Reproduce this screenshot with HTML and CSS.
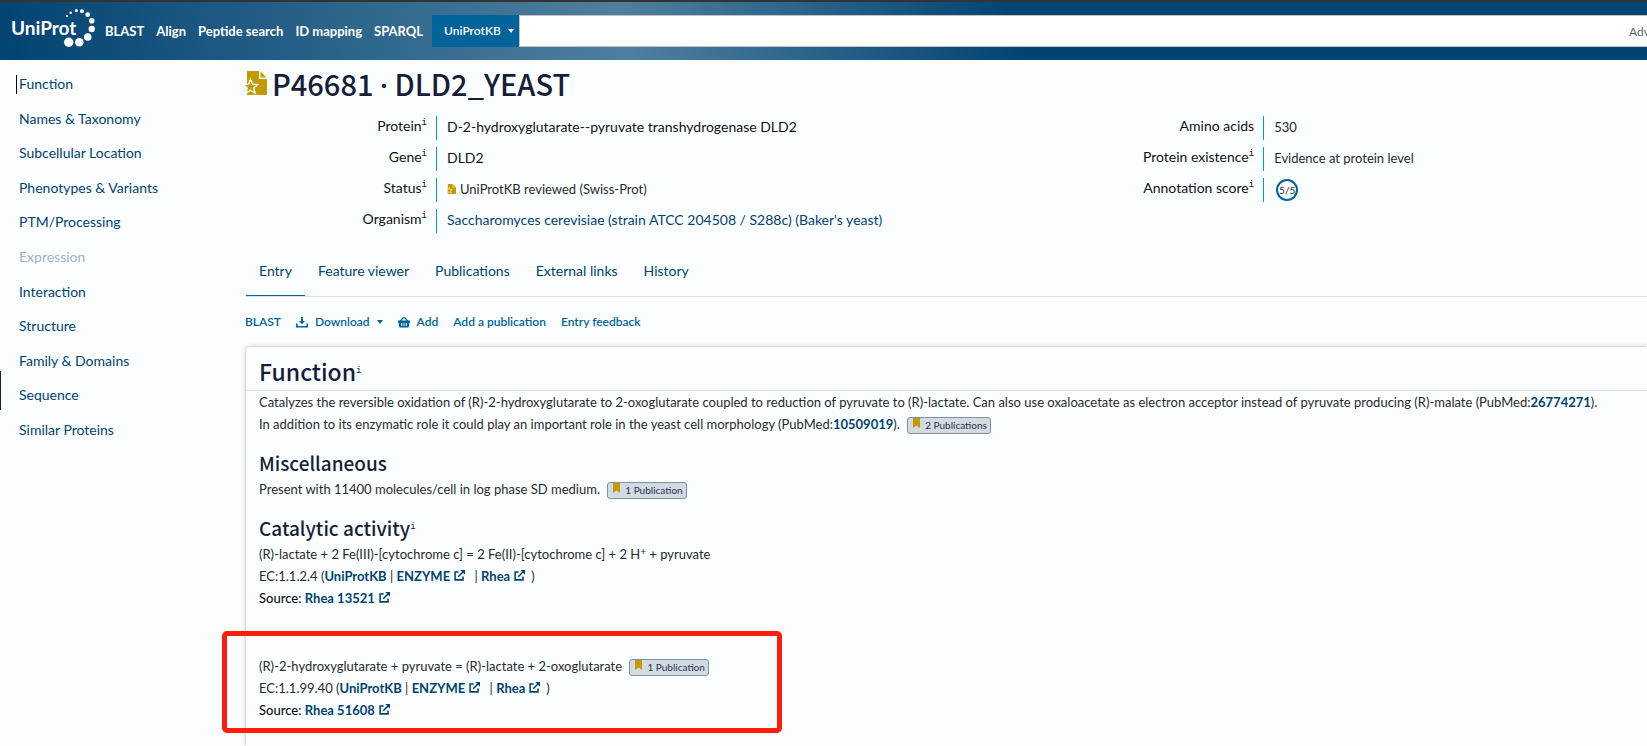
FILE: index.html
```html
<!DOCTYPE html>
<html lang="en">
<head>
<meta charset="utf-8">
<meta name="viewport" content="width=device-width, initial-scale=1">
<title>P46681 · DLD2_YEAST | UniProtKB</title>
<link rel="stylesheet" href="styles.css">
</head>
<body>
<svg class="defs" aria-hidden="true">
  <symbol id="ext" viewBox="0 0 12 12">
    <path d="M5 2.2H1.2v8.6h8.6V7" fill="none" stroke="currentColor" stroke-width="1.7"/>
    <path d="M4.6 7.4 9.8 2.2" fill="none" stroke="currentColor" stroke-width="1.7"/>
    <path d="M6.8 0H12v5.2z" fill="currentColor"/>
  </symbol>
  <symbol id="mark" viewBox="0 0 7 10">
    <path d="M0 0h7v10L3.500 7.600 0 10z" fill="#c39b00"/>
  </symbol>
  <symbol id="reviewed" viewBox="0 0 22 24">
    <path d="M2 0h12v8h8v16H2z" fill="#c39b00"/>
    <path d="M15.500 0.500v6h6z" fill="#c39b00"/>
    <path d="M5.500 8.200l2 5 5.200.3-4 3.400 1.500 5.300-4.700-2.900-4.600 2.900 1.300-5.300-4-3.400 5.300-.3z" fill="#c39b00" stroke="#fbfeff" stroke-width="1.400"/>
  </symbol>
</svg>

<header class="header">
  <a class="logo" href="#" aria-label="UniProt home">
    <svg width="84" height="42" viewBox="12 10 84 42">
      <text class="logo-text" x="11" y="35">UniProt</text>
      <g fill="#fff">
        <circle cx="67" cy="16" r="1"/><circle cx="70.700" cy="12.700" r="1.300"/>
        <circle cx="76.300" cy="10.700" r="1.600"/><circle cx="82" cy="11.300" r="2"/>
        <circle cx="87.700" cy="14.700" r="2.400"/><circle cx="91.700" cy="20.700" r="2.800"/>
        <circle cx="91.700" cy="29" r="3.200"/><circle cx="87.700" cy="37" r="3.800"/>
        <circle cx="79.300" cy="42.300" r="4.300"/><circle cx="68.700" cy="42.300" r="4.700"/>
      </g>
    </svg>
  </a>
  <nav class="tools" aria-label="Tools">
    <a href="#">BLAST</a><a href="#">Align</a><a href="#">Peptide search</a><a href="#">ID mapping</a><a href="#">SPARQL</a>
  </nav>
  <form class="search">
    <div class="namespace">
      <select aria-label="Namespace"><option>UniProtKB</option></select>
      <span class="caret"></span>
    </div>
    <input class="query" type="text" aria-label="Search UniProtKB">
    <a class="advanced" href="#">Advanced</a>
  </form>
</header>

<div class="page">
  <nav class="sections" aria-label="Entry sections">
    <a class="current" href="#function">Function</a>
    <a href="#">Names &amp; Taxonomy</a>
    <a href="#">Subcellular Location</a>
    <a href="#">Phenotypes &amp; Variants</a>
    <a href="#">PTM/Processing</a>
    <a class="disabled" href="#">Expression</a>
    <a href="#">Interaction</a>
    <a href="#">Structure</a>
    <a href="#">Family &amp; Domains</a>
    <a href="#">Sequence</a>
    <a href="#">Similar Proteins</a>
    <span class="handle"></span>
  </nav>

  <main class="entry">
    <h1><svg width="22" height="24" aria-hidden="true"><use href="#reviewed"/></svg><span>P46681 <span class="dot">·</span> DLD2_YEAST</span></h1>

    <div class="overview">
      <dl>
        <dt>Protein<sup>i</sup></dt><dd class="strong">D-2-hydroxyglutarate--pyruvate transhydrogenase DLD2</dd>
        <dt>Gene<sup>i</sup></dt><dd class="strong">DLD2</dd>
        <dt>Status<sup>i</sup></dt><dd><svg class="small-icon" width="9" height="10" viewBox="0 0 22 24" aria-hidden="true"><use href="#reviewed"/></svg>UniProtKB reviewed (Swiss-Prot)</dd>
        <dt>Organism<sup>i</sup></dt><dd><a href="#">Saccharomyces cerevisiae (strain ATCC 204508 / S288c) (Baker's yeast)</a></dd>
      </dl>
      <dl>
        <dt>Amino acids</dt><dd>530</dd>
        <dt>Protein existence<sup>i</sup></dt><dd>Evidence at protein level</dd>
        <dt>Annotation score<sup>i</sup></dt><dd><span class="score">5/5</span></dd>
      </dl>
    </div>

    <nav class="tabs" aria-label="Entry views">
      <a class="active" href="#">Entry</a><a href="#">Feature viewer</a><a href="#">Publications</a><a href="#">External links</a><a href="#">History</a>
    </nav>

    <div class="actions">
      <button type="button">BLAST</button>
      <button type="button"><svg width="12" height="11" viewBox="0 0 12 11" aria-hidden="true"><path d="M5.100 0h1.800v4H9L6 7.300 3 4h2.100z" fill="currentColor"/><path d="M.8 6.500v3.300h10.400V6.500" fill="none" stroke="currentColor" stroke-width="1.600"/></svg>Download<span class="caret"></span></button>
      <button type="button"><svg width="12" height="11" viewBox="0 0 12 11" aria-hidden="true"><path d="M2.300 4.200 5 .8h2l2.700 3.400" fill="none" stroke="currentColor" stroke-width="1.200"/><path fill-rule="evenodd" d="M0 3.600h12v1.800h-.6l-.8 5H1.400l-.8-5H0zM3.200 6v3h1V6zm2.300 0v3h1V6zm2.300 0v3h1V6z" fill="currentColor"/></svg>Add</button>
      <button type="button">Add a publication</button>
      <button type="button">Entry feedback</button>
    </div>

    <section class="card" id="function">
      <h2>Function<sup>i</sup></h2>
      <div class="body">
        <p>Catalyzes the reversible oxidation of (R)-2-hydroxyglutarate to 2-oxoglutarate coupled to reduction of pyruvate to (R)-lactate. Can also use oxaloacetate as electron acceptor instead of pyruvate producing (R)-malate (PubMed:<a href="#">26774271</a>).<br>
        In addition to its enzymatic role it could play an important role in the yeast cell morphology (PubMed:<a href="#">10509019</a>). <button type="button" class="tag"><svg width="7" height="10" aria-hidden="true"><use href="#mark"/></svg>2 Publications</button></p>

        <h3>Miscellaneous</h3>
        <p>Present with 11400 molecules/cell in log phase SD medium. <button type="button" class="tag"><svg width="7" height="10" aria-hidden="true"><use href="#mark"/></svg>1 Publication</button></p>

        <h3>Catalytic activity<sup>i</sup></h3>
        <div class="reaction">
          <p>(R)-lactate + 2 Fe(III)-[cytochrome c] = 2 Fe(II)-[cytochrome c] + 2 H<sup class="charge">+</sup> + pyruvate</p>
          <p>EC:1.1.2.4 (<a href="#">UniProtKB</a> | <a class="ext" href="#">ENZYME<svg width="11" height="11" aria-hidden="true"><use href="#ext"/></svg></a> | <a class="ext" href="#">Rhea<svg width="11" height="11" aria-hidden="true"><use href="#ext"/></svg></a>)</p>
          <p><span class="source">Source:</span> <a class="ext" href="#">Rhea 13521<svg width="11" height="11" aria-hidden="true"><use href="#ext"/></svg></a></p>
        </div>
        <div class="reaction marked">
          <p>(R)-2-hydroxyglutarate + pyruvate = (R)-lactate + 2-oxoglutarate <button type="button" class="tag"><svg width="7" height="10" aria-hidden="true"><use href="#mark"/></svg>1 Publication</button></p>
          <p>EC:1.1.99.40 (<a href="#">UniProtKB</a> | <a class="ext" href="#">ENZYME<svg width="11" height="11" aria-hidden="true"><use href="#ext"/></svg></a> | <a class="ext" href="#">Rhea<svg width="11" height="11" aria-hidden="true"><use href="#ext"/></svg></a>)</p>
          <p><span class="source">Source:</span> <a class="ext" href="#">Rhea 51608<svg width="11" height="11" aria-hidden="true"><use href="#ext"/></svg></a></p>
        </div>
      </div>
    </section>
  </main>
</div>
</body>
</html>
```

FILE: styles.css
```css
:root {
  --navy: #014371;
  --blue: #00639a;
  --ink: #161d39;
  --paper: #fbfeff;
  --heading: "Noto Sans CJK SC", "Noto Sans", sans-serif;
}

*, *::before, *::after { box-sizing: border-box; }

html, body { height: 100%; }

body {
  margin: 0;
  display: flex;
  flex-direction: column;
  overflow: hidden;
  background: var(--paper);
  color: #2a2a2a;
  font: 400 13px/22px Lato, sans-serif;
}

a { color: var(--navy); text-decoration: none; }
button, input, select { font: inherit; }
.defs { position: absolute; width: 0; height: 0; }
h1, h2, h3, p, dl, dd { margin: 0; }

sup {
  font: 400 9px/9px "Liberation Mono", monospace;
  vertical-align: 6px;
}

.caret {
  display: inline-block;
  border: 3px solid transparent;
  border-top: 4px solid currentColor;
  border-bottom: 0;
}

/* Header */
.header {
  flex: none;
  display: flex;
  align-items: center;
  height: 60px;
  padding-left: 12px;
  border-top: 2px solid #333;
  background: linear-gradient(78deg, var(--navy) 0%, #4f7f9f 38%, var(--navy) 62%);
}
.logo { display: flex; }
.logo svg { overflow: visible; }
.logo-text { font: 700 19px Lato, sans-serif; fill: #fff; }
.tools { display: flex; gap: 12px; margin: 0 9px; white-space: nowrap; }
.tools a { color: #fff; font-weight: 700; }
.search {
  flex: 1;
  display: flex;
  min-width: 0;
  height: 32px;
  background: #fff;
}
.namespace { position: relative; width: 87px; flex: none; color: #fff; }
.namespace select {
  appearance: none;
  width: 100%;
  height: 100%;
  padding: 0 12px;
  border: 0;
  border-radius: 0;
  background: var(--blue);
  color: #fff;
  font-size: 12px;
  font-weight: 600;
}
.namespace .caret { position: absolute; right: 5px; top: 14px; }
.query {
  flex: 1;
  min-width: 0;
  border: 1px solid #c3c3c3;
  border-right: 0;
  background: #fff;
}
.advanced {
  width: 18px;
  overflow: hidden;
  border: solid #c3c3c3;
  border-width: 1px 0;
  color: #5a5f78;
  font-size: 12px;
  line-height: 31px;
}

/* Layout */
.page { flex: 1; display: flex; min-height: 0; }
.sections {
  position: relative;
  flex: 0 0 245px;
  display: grid;
  grid-auto-rows: 1fr;
  align-self: flex-start;
  align-items: center;
  min-height: 380px;
  margin-top: 7px;
  padding-left: 19px;
  font-size: 14px;
}
.sections .disabled { color: #9fb4c6; }
.current { position: relative; }
.current::before {
  content: "";
  position: absolute;
  left: -3px;
  top: 2px;
  width: 1px;
  height: 19px;
  background: #000;
}
.handle {
  position: absolute;
  left: 0;
  top: 304px;
  width: 1px;
  height: 39px;
  background: var(--ink);
}
.entry { flex: 1; min-width: 0; display: flex; flex-direction: column; }

h1 {
  display: flex;
  align-items: center;
  gap: 5px;
  margin-top: 5px;
  color: var(--ink);
  font: 500 29px/36px var(--heading);
}
h1 .dot { font-family: "Noto Sans", sans-serif; line-height: 24px; }

/* Entry overview */
.overview { display: grid; grid-template-columns: 59% 41%; margin-top: 15px; }
.overview dl {
  display: grid;
  grid-template-columns: 182px 1fr;
  grid-auto-rows: 24px;
  gap: 7px 9px;
}
dt { text-align: right; color: #111; font-size: 14px; line-height: 20px; white-space: nowrap; }
dd { padding-left: 10px; border-left: 1px solid #009bd0; line-height: 22px; white-space: nowrap; }
dd a, .strong { font-size: 14px; }
.strong { color: #111; }
.small-icon { margin-right: 4px; }
.score {
  display: inline-flex;
  align-items: center;
  justify-content: center;
  width: 22px;
  height: 22px;
  margin: 1px 2px;
  border: 2px solid var(--blue);
  border-radius: 50%;
  font-size: 10px;
}

.tabs { display: flex; margin: 13px 0 0 1px; border-bottom: 1px solid #dfe3e6; }
.tabs a { padding: 0 13px; border-bottom: 1px solid transparent; font-size: 14px; line-height: 49px; }
.tabs .active { border-color: var(--blue); }

.actions { display: flex; gap: 15px; margin: 15px 0; }
.actions button {
  display: flex;
  align-items: center;
  gap: 7px;
  padding: 0;
  border: 0;
  background: none;
  color: var(--blue);
  font-size: 12px;
  font-weight: 600;
  line-height: 20px;
}

/* Section card */
.card {
  flex: 1;
  margin-left: 1px;
  border-radius: 4px 0 0;
  background: var(--paper);
  box-shadow: 0 0 4px rgba(22, 29, 57, .35);
}
h2 {
  padding: 6px 13px 1px;
  border-bottom: 1px solid #dfe3e6;
  color: var(--ink);
  font: 500 23px/36px var(--heading);
}
h2 sup { vertical-align: 8px; }
h3 { margin: 16px 0 3px; color: var(--ink); font: 500 19px/24px var(--heading); }
h3 sup { vertical-align: 7px; }
.body { padding: 0 13px; }
.body p { white-space: nowrap; }
.body a { font-weight: 700; }
.source { color: #111; font-weight: 500; }
.ext svg { margin: 0 6px 0 4px; }
.charge { font: 400 10px/8px Lato, sans-serif; vertical-align: 4px; }
.tag {
  height: 17px;
  margin-left: 4px;
  padding: 0 3px 0 5px;
  border: 1px solid #7c93a4;
  border-radius: 3px;
  background: #d2dbe2;
  color: #2c3050;
  font-size: 10px;
  line-height: 15px;
}
.tag svg { margin-right: 5px; vertical-align: 1px; }

.reaction + .reaction { margin-top: 46px; }
.marked { position: relative; }
.marked::after {
  content: "";
  position: absolute;
  left: -37px;
  top: -24px;
  width: 560px;
  height: 102px;
  border: 5px solid #ff1d0f;
  border-radius: 5px;
  pointer-events: none;
}
```
